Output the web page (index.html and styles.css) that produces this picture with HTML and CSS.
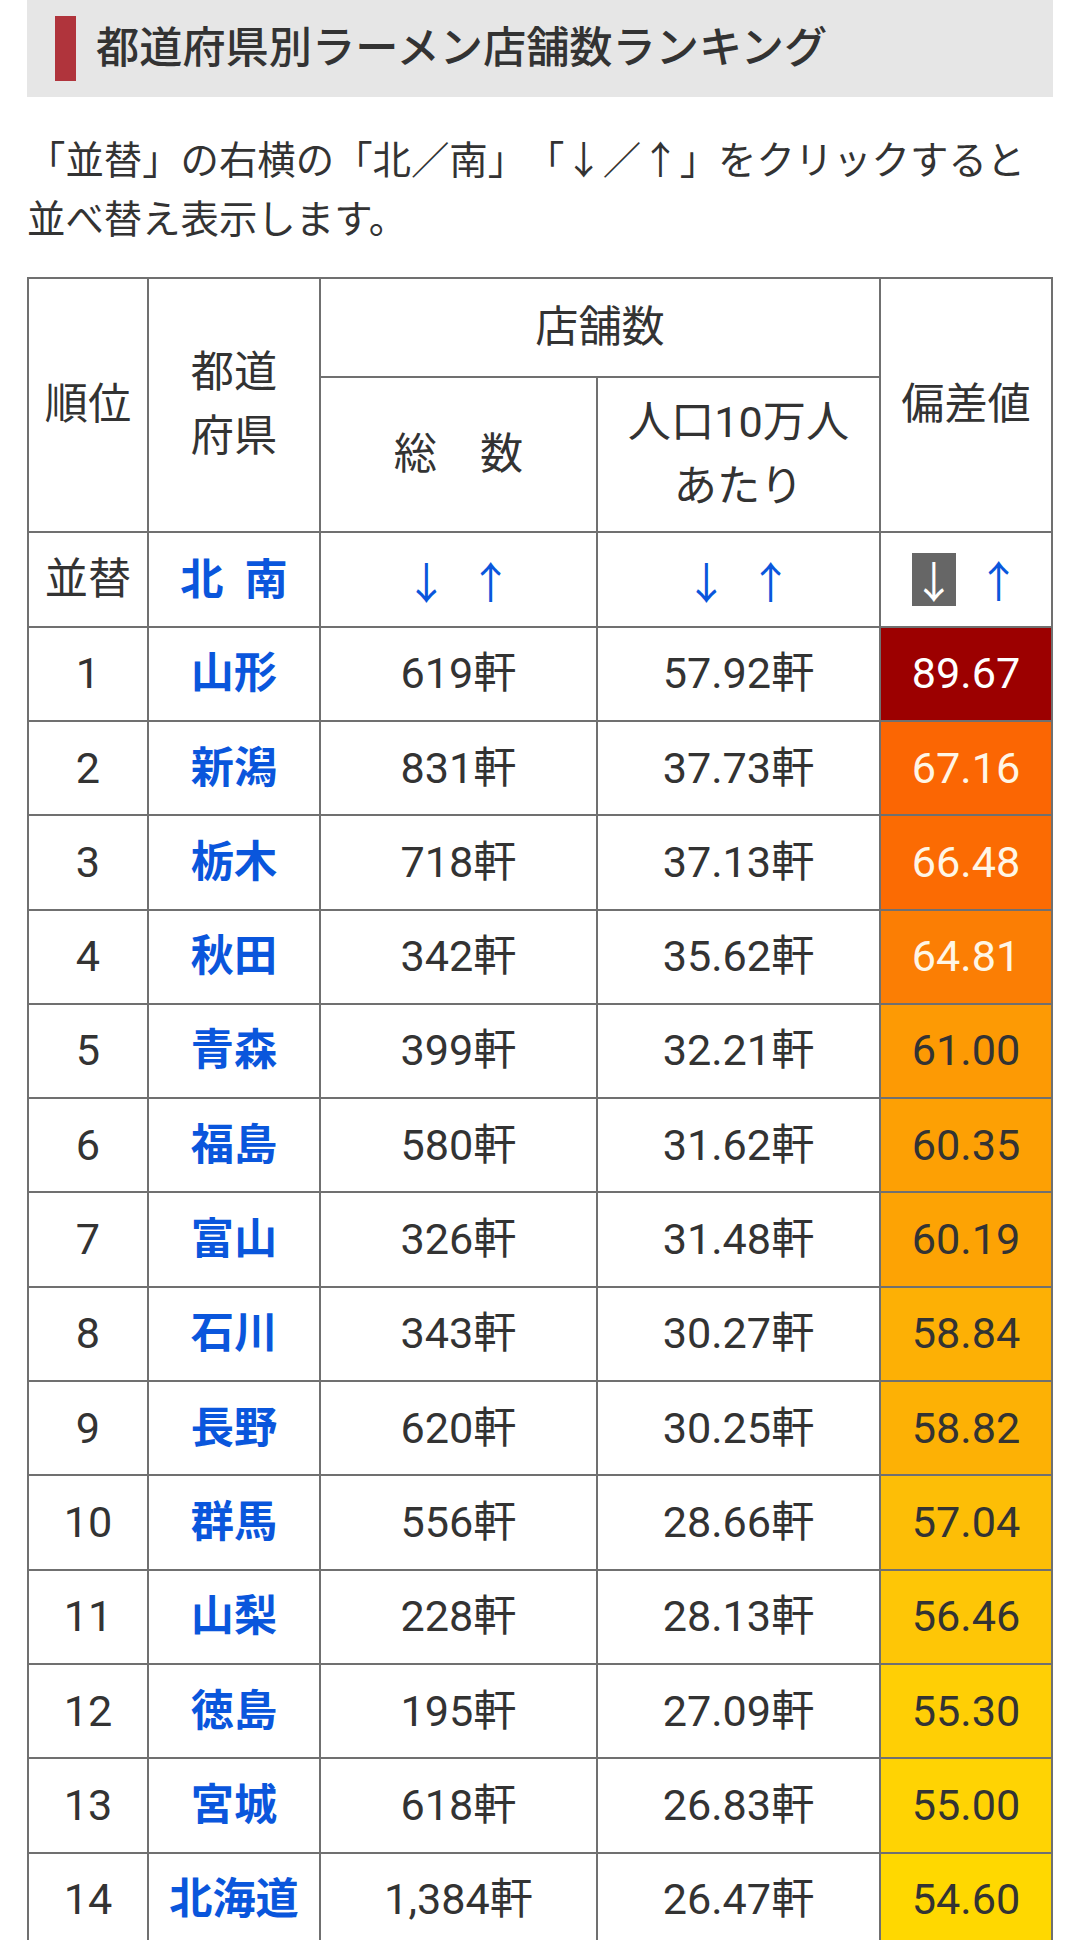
FILE: index.html
```html
<!DOCTYPE html>
<html lang="ja">
<head>
<meta charset="utf-8">
<title>都道府県別ラーメン店舗数ランキング</title>
<link rel="stylesheet" href="styles.css">
</head>
<body>
<div class="page">
  <h2 class="title-band"><span class="bar"></span><span class="title">都道府県別ラーメン店舗数ランキング</span></h2>
  <p class="lead">「並替」の右横の「北／南」「↓／↑」をクリックすると並べ替え表示します。</p>
  <table class="rank">
    <colgroup>
      <col class="c-rank"><col class="c-pref"><col class="c-total"><col class="c-per"><col class="c-dev">
    </colgroup>
    <thead>
      <tr class="hr1">
        <th rowspan="2">順位</th>
        <th rowspan="2">都道<br>府県</th>
        <th colspan="2">店舗数</th>
        <th rowspan="2">偏差値</th>
      </tr>
      <tr class="hr2">
        <th>総　数</th>
        <th>人口10万人<br>あたり</th>
      </tr>
      <tr class="sort">
        <td>並替</td>
        <td><span class="pair"><a class="lk">北</a><a class="lk">南</a></span></td>
        <td><span class="pair"><a class="lk arr">↓</a><a class="lk arr">↑</a></span></td>
        <td><span class="pair"><a class="lk arr">↓</a><a class="lk arr">↑</a></span></td>
        <td><span class="pair"><span class="arr active">↓</span><a class="lk arr">↑</a></span></td>
      </tr>
    </thead>
    <tbody>
      <tr><td>1</td><td class="pref">山形</td><td>619軒</td><td>57.92軒</td><td class="dev light" style="background:#9c0000">89.67</td></tr>
      <tr><td>2</td><td class="pref">新潟</td><td>831軒</td><td>37.73軒</td><td class="dev cream" style="background:#fb6603">67.16</td></tr>
      <tr><td>3</td><td class="pref">栃木</td><td>718軒</td><td>37.13軒</td><td class="dev cream" style="background:#fb6b03">66.48</td></tr>
      <tr><td>4</td><td class="pref">秋田</td><td>342軒</td><td>35.62軒</td><td class="dev cream" style="background:#fb7e04">64.81</td></tr>
      <tr><td>5</td><td class="pref">青森</td><td>399軒</td><td>32.21軒</td><td class="dev" style="background:#fd9a04">61.00</td></tr>
      <tr><td>6</td><td class="pref">福島</td><td>580軒</td><td>31.62軒</td><td class="dev" style="background:#fda004">60.35</td></tr>
      <tr><td>7</td><td class="pref">富山</td><td>326軒</td><td>31.48軒</td><td class="dev" style="background:#fda304">60.19</td></tr>
      <tr><td>8</td><td class="pref">石川</td><td>343軒</td><td>30.27軒</td><td class="dev" style="background:#fdb005">58.84</td></tr>
      <tr><td>9</td><td class="pref">長野</td><td>620軒</td><td>30.25軒</td><td class="dev" style="background:#fdb105">58.82</td></tr>
      <tr><td>10</td><td class="pref">群馬</td><td>556軒</td><td>28.66軒</td><td class="dev" style="background:#fdbe06">57.04</td></tr>
      <tr><td>11</td><td class="pref">山梨</td><td>228軒</td><td>28.13軒</td><td class="dev" style="background:#fec606">56.46</td></tr>
      <tr><td>12</td><td class="pref">徳島</td><td>195軒</td><td>27.09軒</td><td class="dev" style="background:#ffcf05">55.30</td></tr>
      <tr><td>13</td><td class="pref">宮城</td><td>618軒</td><td>26.83軒</td><td class="dev" style="background:#ffd303">55.00</td></tr>
      <tr><td>14</td><td class="pref">北海道</td><td>1,384軒</td><td>26.47軒</td><td class="dev" style="background:#ffd800">54.60</td></tr>
    </tbody>
  </table>
</div>
</body>
</html>
```

FILE: styles.css
```css
html, body {
  margin: 0;
  padding: 0;
  background: #ffffff;
}
body {
  font-family: Roboto, "Noto Sans CJK JP", "Noto Sans", sans-serif;
  color: #333333;
  text-spacing-trim: space-all;
}
.page {
  padding: 0 27px;
}
.title-band {
  margin: 0;
  height: 97px;
  background: #e6e6e6;
  display: flex;
  align-items: center;
  padding-left: 28px;
  box-sizing: border-box;
}
.bar {
  width: 21px;
  height: 65px;
  background: #b0343c;
  margin-right: 20px;
  flex: none;
}
.title {
  font-size: 43.2px;
  font-weight: 500;
  line-height: 1;
  color: #333333;
  letter-spacing: 0;
}
.lead {
  margin: 34px 0 28px;
  font-size: 38.4px;
  line-height: 59px;
  color: #333333;
}
.rank {
  width: 100%;
  table-layout: fixed;
  border-collapse: collapse;
  font-size: 43.2px;
  color: #333333;
}
.c-rank { width: 120px; }
.c-pref { width: 172px; }
.c-total { width: 277px; }
.c-per { width: 283px; }
.c-dev { width: 172px; }
.rank th, .rank td {
  border: 2px solid #707070;
  padding: 0;
  text-align: center;
  vertical-align: middle;
  font-weight: normal;
}
.rank th {
  line-height: 1.48;
}
.hr1 th { height: 97px; }
.hr2 th { height: 153px; }
.sort td { height: 92.7px; line-height: 1; }
.rank tbody td {
  height: 92.3px;
  line-height: 1;
}
.pair {
  display: inline-flex;
  align-items: center;
  gap: 21px;
  vertical-align: middle;
}
.lk {
  color: #0a56dc;
  font-weight: bold;
  text-decoration: none;
}
.arr {
  font-family: "Noto Sans CJK JP", sans-serif;
  font-weight: normal;
}
.active {
  display: inline-block;
  width: 44px;
  height: 53px;
  line-height: 53px;
  background: #666666;
  color: #ffffff;
  text-align: center;
}
.rank td.pref {
  color: #0a56dc;
  font-weight: bold;
}
.rank td.dev.light { color: #ffffff; }
.rank td.dev.cream { color: #fff6e6; }
```
